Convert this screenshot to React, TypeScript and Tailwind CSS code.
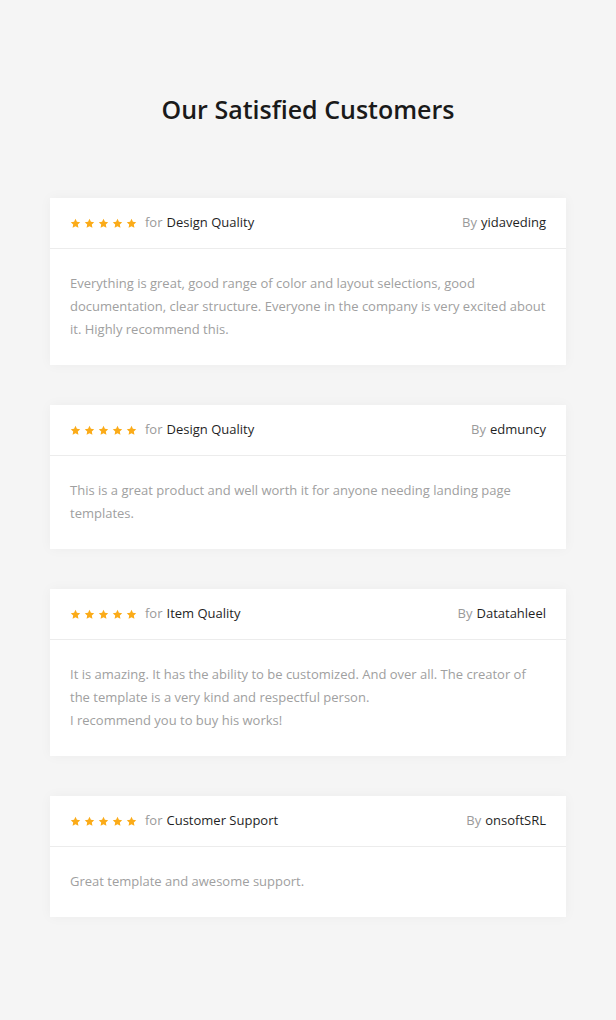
import React from 'react';

interface Review {
  category: string;
  author: string;
  text: string[];
}

const reviews: Review[] = [
  {
    category: 'Design Quality',
    author: 'yidaveding',
    text: [
      'Everything is great, good range of color and layout selections, good documentation, clear structure. Everyone in the company is very excited about it. Highly recommend this.',
    ],
  },
  {
    category: 'Design Quality',
    author: 'edmuncy',
    text: ['This is a great product and well worth it for anyone needing landing page templates.'],
  },
  {
    category: 'Item Quality',
    author: 'Datatahleel',
    text: [
      'It is amazing. It has the ability to be customized. And over all. The creator of the template is a very kind and respectful person.',
      'I recommend you to buy his works!',
    ],
  },
  {
    category: 'Customer Support',
    author: 'onsoftSRL',
    text: ['Great template and awesome support.'],
  },
];

const Star = () => (
  <svg width="11" height="11" viewBox="0 0 24 24" fill="#fbab18" className="shrink-0">
    <path d="M12 1.8l3.1 6.6 7.2.9-5.3 5 1.4 7.1L12 17.9l-6.4 3.5 1.4-7.1-5.3-5 7.2-.9z" />
  </svg>
);

const ReviewCard = ({ review }: { review: Review }) => (
  <div className="bg-white shadow-[0_0_12px_rgba(0,0,0,0.04)]">
    <div className="flex items-center justify-between h-[51px] px-5 border-b border-[#ececec] text-[13px]">
      <div className="flex items-center">
        <div className="flex items-center gap-[3px]">
          <Star />
          <Star />
          <Star />
          <Star />
          <Star />
        </div>
        <span className="ml-2 text-[#9a9a9a]">for</span>
        <span className="ml-1 text-[#1f1f1f]">{review.category}</span>
      </div>
      <div>
        <span className="text-[#9a9a9a]">By</span>
        <span className="ml-1 text-[#1f1f1f]">{review.author}</span>
      </div>
    </div>
    <div className="px-5 pt-[23px] pb-[24px] text-[13px] leading-[23px] text-[#a0a0a0]">
      {review.text.map((t, i) => (
        <p key={i}>{t}</p>
      ))}
    </div>
  </div>
);

export default function App() {
  return (
    <div
      className="min-h-[1020px] bg-[#f5f5f5] px-[50px] pt-[92px] pb-[100px]"
      style={{ fontFamily: '"Open Sans", "Liberation Sans", sans-serif' }}
    >
      <h2 className="text-center text-[25px] font-semibold text-[#1a1a1a] leading-[34px]">
        Our Satisfied Customers
      </h2>
      <div className="mt-[72px] flex flex-col gap-10">
        {reviews.map((r, i) => (
          <ReviewCard key={i} review={r} />
        ))}
      </div>
    </div>
  );
}
